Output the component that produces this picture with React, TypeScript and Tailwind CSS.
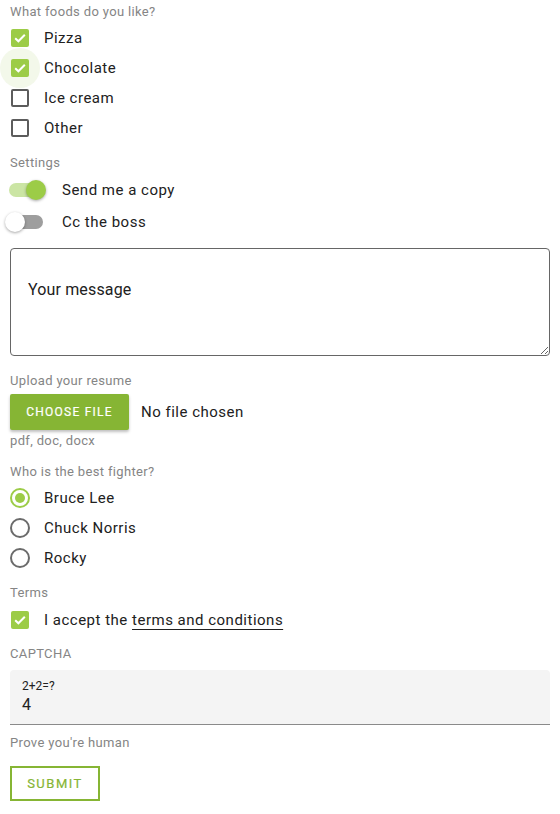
import React from 'react';

const GREEN = 'bg-[#9ccc47]';

const Label: React.FC<{ children: React.ReactNode; className?: string }> = ({ children, className = '' }) => (
  <div className={`h-[22px] flex items-center text-[13px] tracking-[0.35px] text-[#858585] ${className}`}>{children}</div>
);

const Check: React.FC<{ checked?: boolean; ripple?: boolean; children: React.ReactNode }> = ({ checked, ripple, children }) => (
  <div className="h-[30px] flex items-center">
    <div className="relative w-[40px] h-[30px] flex items-center">
      {ripple && <div className="absolute left-0 top-[-5px] w-[40px] h-[40px] rounded-full bg-[#f3f8ea]" />}
      {checked ? (
        <div className={`relative ml-[11px] w-[18px] h-[18px] rounded-[2px] ${GREEN} flex items-center justify-center`}>
          <svg width="18" height="18" viewBox="0 0 18 18" fill="none">
            <path d="M4.2 9.2l3.2 3.1 6.4-6.5" stroke="white" strokeWidth="2" />
          </svg>
        </div>
      ) : (
        <div className="relative ml-[11px] w-[18px] h-[18px] rounded-[2px] border-2 border-[#5c5c5c]" />
      )}
    </div>
    <span className="ml-[4px] text-[15px] tracking-[0.5px] text-[#212121]">{children}</span>
  </div>
);

const Radio: React.FC<{ checked?: boolean; children: React.ReactNode }> = ({ checked, children }) => (
  <div className="h-[30px] flex items-center">
    <div className="w-[40px] flex items-center">
      <div
        className={`ml-[10px] w-[20px] h-[20px] rounded-full border-2 flex items-center justify-center ${
          checked ? 'border-[#9ccc47]' : 'border-[#6b6b6b]'
        }`}
      >
        {checked && <div className="w-[10px] h-[10px] rounded-full bg-[#9ccc47]" />}
      </div>
    </div>
    <span className="ml-[4px] text-[15px] tracking-[0.5px] text-[#212121]">{children}</span>
  </div>
);

const Toggle: React.FC<{ on?: boolean; children: React.ReactNode }> = ({ on, children }) => (
  <div className="h-[32px] flex items-center">
    <div className="w-[52px] flex items-center">
      <div className={`relative ml-[9px] w-[34px] h-[14px] rounded-full ${on ? 'bg-[#cbe5a4]' : 'bg-[#9e9e9e]'}`}>
        <div
          className={`absolute top-[-3px] w-[20px] h-[20px] rounded-full shadow-[0_1px_3px_rgba(0,0,0,0.35)] ${
            on ? 'left-[17px] bg-[#9ccc47]' : 'left-[-4px] bg-white'
          }`}
        />
      </div>
    </div>
    <span className="ml-[10px] text-[15px] tracking-[0.5px] text-[#212121]">{children}</span>
  </div>
);

export default function App() {
  return (
    <div className="w-[560px] h-[814px] bg-white px-[10px] font-['Roboto',sans-serif] flex flex-col">
      <Label className="h-[23px]">What foods do you like?</Label>
      <div className="-mx-[10px]">
        <Check checked>Pizza</Check>
        <Check checked ripple>Chocolate</Check>
        <Check>Ice cream</Check>
        <Check>Other</Check>
      </div>

      <Label className="mt-[9px]">Settings</Label>
      <div className="-mx-[10px]">
        <Toggle on>Send me a copy</Toggle>
        <Toggle>Cc the boss</Toggle>
      </div>

      <textarea
        className="mt-[10px] h-[108px] w-full rounded-[4px] border border-[#666] pt-[31px] pl-[17px] text-[16px] leading-5 tracking-[0.15px] text-[#212121] placeholder:text-[#212121] outline-none"
        placeholder="Your message"
      />

      <Label className="mt-[14px]">Upload your resume</Label>
      <div className="mt-[2px] flex items-center">
        <button className="h-[36px] w-[119px] rounded-[2px] bg-[#86b534] text-white text-[12px] font-normal tracking-[1.25px] [-webkit-text-stroke:0.2px_white] shadow-[0_2px_3px_rgba(0,0,0,0.25)]">
          CHOOSE FILE
        </button>
        <span className="ml-[12px] text-[15px] tracking-[0.5px] text-[#212121]">No file chosen</span>
      </div>
      <Label>pdf, doc, docx</Label>

      <Label className="mt-[9px]">Who is the best fighter?</Label>
      <div className="-mx-[10px]">
        <Radio checked>Bruce Lee</Radio>
        <Radio>Chuck Norris</Radio>
        <Radio>Rocky</Radio>
      </div>

      <Label className="mt-[9px]">Terms</Label>
      <div className="-mx-[10px] mt-[1px]">
        <Check checked>
          I accept the{' '}
          <a className="underline underline-offset-[4px] decoration-[#212121]">terms and conditions</a>
        </Check>
      </div>

      <Label className="mt-[8px]">CAPTCHA</Label>
      <div className="mt-[5px] h-[55px] rounded-t-[4px] bg-[#f4f4f4] border-b border-[#8a8a8a] pl-[12px] pt-[8px]">
        <div className="text-[12px] leading-4 text-[#212121]">2+2=?</div>
        <div className="text-[16px] leading-5 text-[#212121] mt-[1px]">4</div>
      </div>
      <Label className="mt-[7px]">Prove you're human</Label>

      <div className="mt-[12px]">
        <button className="h-[35px] w-[90px] border-2 border-[#86b534] text-[#86b534] text-[13px] font-normal tracking-[1.5px] [-webkit-text-stroke:0.2px_#86b534]">
          SUBMIT
        </button>
      </div>
    </div>
  );
}
